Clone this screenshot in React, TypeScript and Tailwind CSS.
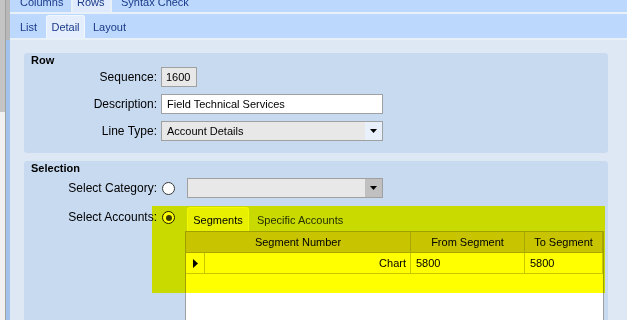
import React from "react"

const sans = "font-['Liberation_Sans',Arial,sans-serif]"

function Radio({ checked }: { checked?: boolean }) {
  return (
    <div className={`w-[13px] h-[13px] rounded-full bg-white flex items-center justify-center shrink-0 ${checked ? "border-[1.5px] border-[#1a1a1a]" : "border border-[#3a3a3a]"}`}>
      {checked && <div className="w-[6px] h-[6px] rounded-full bg-[#3c3c3c]" />}
    </div>
  )
}

function DownArrow() {
  return (
    <svg width="7" height="4" viewBox="0 0 7 4">
      <polygon points="0,0 7,0 3.5,4" fill="#000" />
    </svg>
  )
}

function FormRow({ label, children }: { label: string; children: React.ReactNode }) {
  return (
    <div className="flex items-center h-[20px]">
      <div className="w-[133px] text-right text-[12px] leading-[14px] text-black">{label}</div>
      <div className="ml-[4px]">{children}</div>
    </div>
  )
}

export default function App() {
  return (
    <div className={`w-[627px] h-[320px] overflow-hidden flex bg-[#dee8f4] ${sans}`}>
      {/* scroll strip */}
      <div className="w-[6px] flex flex-col border-r border-[#a0a0a0]">
        <div className="h-[112px] bg-[#c4c4c4]" />
        <div className="flex-1 bg-[#f0f0f0]" />
      </div>

      <div className="flex-1 flex flex-col">
        {/* tab strips */}
        <div className="flex h-[40px]">
          <div className="w-[4px] bg-[#b8b8b8]" />
          <div className="flex-1 flex flex-col">
            <div className="h-[12px] flex items-end pb-[3px] bg-[#bcd8fc] text-[11px] leading-[13px] text-[#1a3a8a] overflow-hidden">
              <div className="w-[61px] pl-[10px] self-stretch flex items-end">Columns</div>
              <div className="w-[2px] h-[12px] bg-[#e8f0f8] self-start" />
              <div className="w-[37px] pl-[4px] h-[12px] -mb-[3px] pb-[3px] bg-[#dfeafc] flex items-end">Rows</div>
              <div className="w-[2px] h-[12px] bg-[#e8f0f8] self-start" />
              <div className="pl-[9px]">Syntax Check</div>
            </div>
            <div className="h-[2px] bg-[#e8f0f8]" />
            <div className="h-[24px] flex items-end bg-[#bcd8fc] text-[11px] leading-[13px] text-[#1a3a8a]">
              <div className="w-[36px] pl-[10px] h-[23px] flex items-center pt-[2px]">List</div>
              <div className="w-[39px] h-[23px] bg-[#e4eefc] border border-b-0 border-[#f2f7fe] rounded-t-[3px] flex items-center justify-center pt-[1px]">Detail</div>
              <div className="pl-[8px] h-[23px] flex items-center pt-[2px]">Layout</div>
            </div>
            <div className="h-[2px] bg-[#e8f0f8]" />
          </div>
        </div>

        {/* content */}
        <div className="flex-1 flex">
          <div className="w-[4px] bg-[#a2c2ec]" />
          <div className="flex-1 pl-[14px] pt-[13px]">
            {/* Row panel */}
            <div className="w-[584px] h-[100px] bg-[#c8daf0] rounded-[3px]">
              <div className="pl-[7px] pt-[1px] text-[11px] leading-[13px] font-bold text-black">Row</div>
              <div className="flex flex-col gap-[7px]">
                <FormRow label="Sequence:">
                  <div className="w-[36px] h-[20px] bg-[#e8e8e8] border border-[#a0a0a0] text-[11px] pl-[4px] flex items-center text-black">1600</div>
                </FormRow>
                <FormRow label="Description:">
                  <div className="w-[222px] h-[20px] bg-white border border-[#a0a0a0] text-[11px] pl-[5px] flex items-center text-black">Field Technical Services</div>
                </FormRow>
                <FormRow label="Line Type:">
                  <div className="w-[222px] h-[20px] bg-[#e8e8e8] border border-[#a0a0a0] flex text-[11px] text-black">
                    <div className="flex-1 pl-[5px] flex items-center">Account Details</div>
                    <div className="w-[17px] bg-[#e8f0fc] flex items-center justify-center">
                      <DownArrow />
                    </div>
                  </div>
                </FormRow>
              </div>
            </div>

            {/* Selection panel */}
            <div className="relative mt-[8px] w-[584px] h-[200px] bg-[#c8daf0] rounded-t-[3px]">
              <div className="pl-[7px] pt-[1px] text-[11px] leading-[13px] font-bold text-black">Selection</div>

              <div className="mt-[3px] flex items-center h-[20px]">
                <div className="w-[133px] text-right text-[12px] leading-[14px] text-black">Select Category:</div>
                <div className="ml-[5px]"><Radio /></div>
                <div className="ml-[12px] w-[196px] h-[20px] bg-[#e8e8e8] border border-[#a0a0a0] flex">
                  <div className="flex-1" />
                  <div className="w-[17px] bg-[#c0c0c0] flex items-center justify-center">
                    <DownArrow />
                  </div>
                </div>
              </div>

              <div className="mt-[8px] flex items-start">
                <div className="w-[133px] pt-[4px] text-right text-[12px] leading-[14px] text-black">Select Accounts:</div>
                <div className="ml-[5px] mt-[5px]"><Radio checked /></div>
                <div className="ml-[10px] w-[419px] flex flex-col">
                  <div className="h-[25px] flex items-start text-[11px] leading-[13px]">
                    <div className="ml-[2px] mt-[1px] w-[62px] h-[24px] bg-[#e8f0fc] border border-b-0 border-[#f4f8fe] rounded-t-[3px] flex items-center justify-center text-black pt-[1px]">Segments</div>
                    <div className="ml-[8px] h-[25px] flex items-center pt-[3px] text-[#243070]">Specific Accounts</div>
                  </div>
                  <div className="h-[100px] bg-white border border-[#a0a0a0] text-[11px] text-black">
                    <div className="flex h-[21px] bg-[#c8c4c8] border-b border-[#a8a8a8]">
                      <div className="w-[225px] border-r border-[#a8a8a8] flex items-center justify-center">Segment Number</div>
                      <div className="w-[114px] border-r border-[#a8a8a8] flex items-center justify-center">From Segment</div>
                      <div className="w-[78px] border-r border-[#a8a8a8] flex items-center justify-center">To Segment</div>
                    </div>
                    <div className="flex h-[21px] border-b border-[#c8c8c8]">
                      <div className="w-[19px] border-r border-[#c8c8c8] flex items-center justify-center pl-[1px]">
                        <svg width="5" height="9" viewBox="0 0 5 9">
                          <polygon points="0,0 5,4.5 0,9" fill="#000" />
                        </svg>
                      </div>
                      <div className="w-[206px] border-r border-[#c8c8c8] flex items-center justify-end pr-[4px]">Chart</div>
                      <div className="w-[114px] border-r border-[#c8c8c8] flex items-center pl-[5px]">5800</div>
                      <div className="w-[78px] border-r border-[#c8c8c8] flex items-center pl-[5px]">5800</div>
                    </div>
                  </div>
                </div>
              </div>

              {/* highlight overlay */}
              <div className="absolute left-[128px] top-[45px] w-[453px] h-[87px] bg-[#ffff00] mix-blend-multiply pointer-events-none" />
            </div>
          </div>
        </div>
      </div>
    </div>
  )
}
